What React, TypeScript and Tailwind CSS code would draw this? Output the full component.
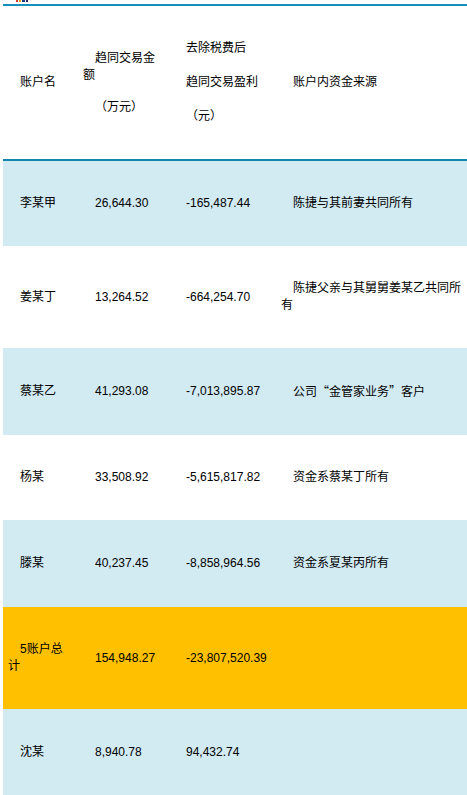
import React from "react";

const font = { fontFamily: '"Liberation Sans", "Noto Sans CJK SC", sans-serif' };
const cjk = { fontFamily: '"Noto Sans CJK SC", sans-serif' };

type Row = { name: string; amt: string; pnl: string; src: React.ReactNode; bg: string; extra?: boolean };

const rows: Row[] = [
  { name: "李某甲", amt: "26,644.30", pnl: "-165,487.44", src: "陈捷与其前妻共同所有", bg: "bg-[#d2eaf2]" },
  { name: "姜某丁", amt: "13,264.52", pnl: "-664,254.70", src: "陈捷父亲与其舅舅姜某乙共同所有", bg: "bg-white" },
  {
    name: "蔡某乙",
    amt: "41,293.08",
    pnl: "-7,013,895.87",
    src: (
      <>
        公司<span style={cjk}>“</span>金管家业务<span style={cjk}>”</span>客户
      </>
    ),
    bg: "bg-[#d2eaf2]",
  },
  { name: "杨某", amt: "33,508.92", pnl: "-5,615,817.82", src: "资金系蔡某丁所有", bg: "bg-white" },
  { name: "滕某", amt: "40,237.45", pnl: "-8,858,964.56", src: "资金系夏某丙所有", bg: "bg-[#d2eaf2]", extra: true },
  { name: "5账户总计", amt: "154,948.27", pnl: "-23,807,520.39", src: "", bg: "bg-[#ffc000]" },
  { name: "沈某", amt: "8,940.78", pnl: "94,432.74", src: "", bg: "bg-[#d2eaf2]", extra: true },
];

function P({ children }: { children: React.ReactNode }) {
  return <p className="indent-[12px] leading-[17px]">{children}</p>;
}

export default function App() {
  return (
    <div className="bg-white min-h-[795px] text-[12px] text-black" style={font}>
      <div className="h-[4px] flex items-start pl-[16px] gap-[1px] overflow-hidden">
        <div className="w-[2px] h-[2px] bg-[#d43c2c]" />
        <div className="w-[2px] h-[2px] bg-[#e8a020]" />
        <div className="w-[3px] h-[2px] bg-[#1e3a8a]" />
        <div className="w-[2px] h-[2px] bg-[#2a2a60]" />
      </div>
      <div className="pl-[3px]">
        <table className="w-full table-fixed border-collapse">
          <colgroup>
            <col className="w-[75px]" />
            <col className="w-[91px]" />
            <col className="w-[107px]" />
            <col />
          </colgroup>
          <thead>
            <tr className="border-t-2 border-t-[#1590bd] border-b-2 border-b-[#1585ae] bg-white">
              <th className="px-[5px] py-[34px] align-middle text-left font-normal">
                <P>账户名</P>
              </th>
              <th className="px-[5px] py-[34px] align-middle text-left font-normal">
                <div className="flex flex-col gap-[15px]">
                  <P>趋同交易金额</P>
                  <P>（万元）</P>
                </div>
              </th>
              <th className="px-[5px] py-[34px] align-middle text-left font-normal">
                <div className="flex flex-col gap-[17px]">
                  <P>去除税费后</P>
                  <P>趋同交易盈利</P>
                  <P>（元）</P>
                </div>
              </th>
              <th className="px-[5px] py-[34px] align-middle text-left font-normal">
                <P>账户内资金来源</P>
              </th>
            </tr>
          </thead>
          <tbody>
            {rows.map((r, i) => {
              const pad = r.extra ? "px-[5px] pt-[35px] pb-[35px] align-middle" : "px-[5px] py-[34px] align-middle";
              return (
                <tr
                  key={i}
                  className={`${r.bg} ${i === rows.length - 1 ? "border-b-2 border-b-[#ffc000]" : ""}`}
                >
                  <td className={pad}>
                    <P>{r.name}</P>
                  </td>
                  <td className={`${pad} whitespace-nowrap`}>
                    <P>{r.amt}</P>
                  </td>
                  <td className={`${pad} whitespace-nowrap`}>
                    <P>{r.pnl}</P>
                  </td>
                  <td className={pad}>
                    {r.src ? <P>{r.src}</P> : <P>&nbsp;</P>}
                  </td>
                </tr>
              );
            })}
          </tbody>
        </table>
      </div>
    </div>
  );
}
